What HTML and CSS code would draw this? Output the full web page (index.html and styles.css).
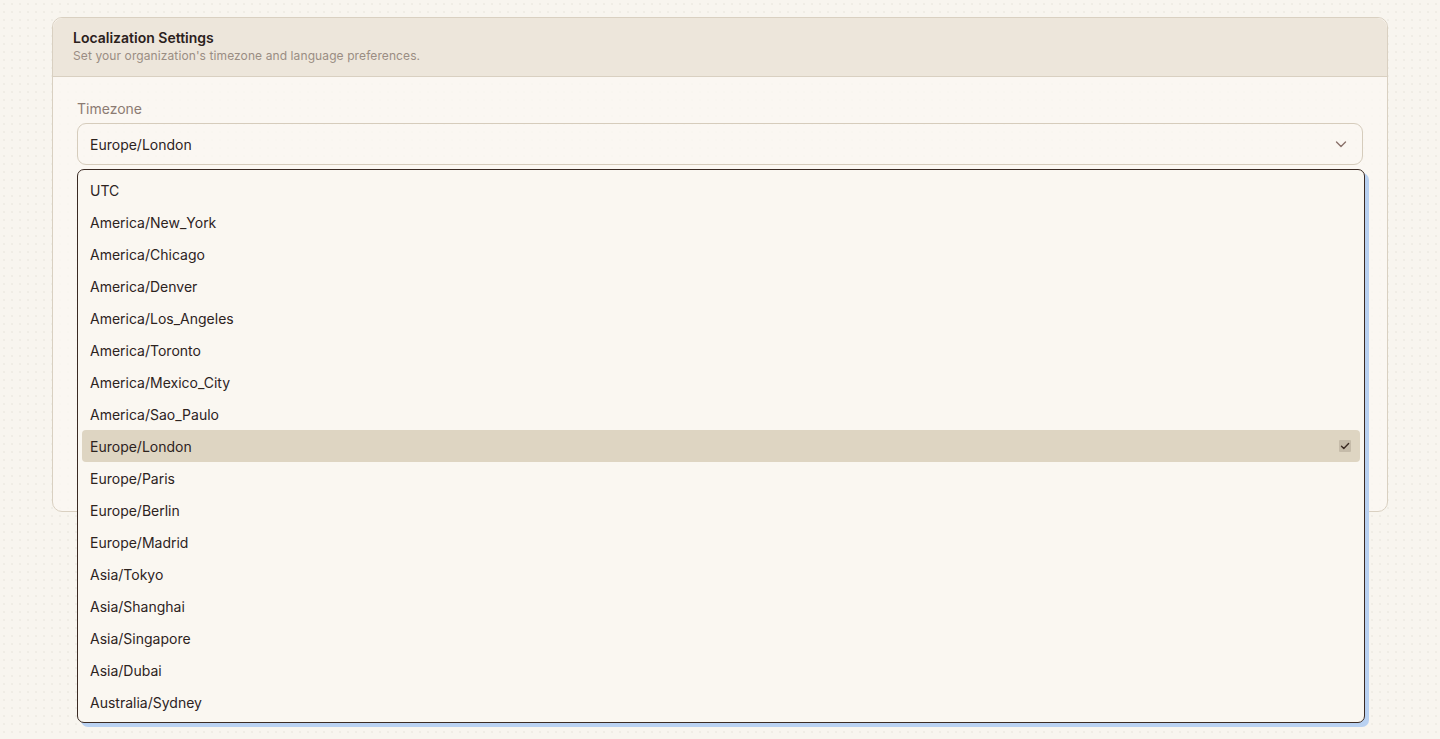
FILE: index.html
```html
<!DOCTYPE html>
<html lang="en">
<head>
<meta charset="utf-8">
<title>Localization Settings</title>
<link rel="stylesheet" href="styles.css">
</head>
<body>
<main class="page">
  <section class="card">
    <header class="card-head">
      <h2 class="card-title">Localization Settings</h2>
      <p class="card-sub">Set your organization's timezone and language preferences.</p>
    </header>
    <div class="card-body">
      <div class="field field-open">
        <label class="label">Timezone</label>
        <button class="select" type="button">
          <span>Europe/London</span>
          <svg class="chev" width="14" height="14" viewBox="0 0 14 14" fill="none"><path d="M2.5 5l4.5 4.5L11.5 5" stroke="currentColor" stroke-width="1.4" stroke-linecap="round" stroke-linejoin="round"/></svg>
        </button>
        <ul class="listbox">
          <li class="opt">UTC</li>
          <li class="opt">America/New_York</li>
          <li class="opt">America/Chicago</li>
          <li class="opt">America/Denver</li>
          <li class="opt">America/Los_Angeles</li>
          <li class="opt">America/Toronto</li>
          <li class="opt">America/Mexico_City</li>
          <li class="opt">America/Sao_Paulo</li>
          <li class="opt opt-sel">Europe/London<span class="check"><svg width="12" height="12" viewBox="0 0 12 12" fill="none"><path d="M2.5 6.3l2.3 2.2L9.6 3.6" stroke="currentColor" stroke-width="1.4" stroke-linecap="round" stroke-linejoin="round"/></svg></span></li>
          <li class="opt">Europe/Paris</li>
          <li class="opt">Europe/Berlin</li>
          <li class="opt">Europe/Madrid</li>
          <li class="opt">Asia/Tokyo</li>
          <li class="opt">Asia/Shanghai</li>
          <li class="opt">Asia/Singapore</li>
          <li class="opt">Asia/Dubai</li>
          <li class="opt">Australia/Sydney</li>
        </ul>
      </div>
      <div class="field-rest"></div>
    </div>
  </section>
</main>
</body>
</html>
```

FILE: styles.css
```css
* { box-sizing: border-box; }
html, body { margin: 0; padding: 0; }
body {
  background-color: #f8f5ef;
  background-image: radial-gradient(circle, rgba(120, 100, 80, 0.06) 0.7px, transparent 1px);
  background-size: 8px 8px;
  font-family: Inter, "Liberation Sans", sans-serif;
  color: #2d231e;
  height: 739px;
  overflow: hidden;
}
.page {
  padding: 17px 52px 0 52px;
}
.card {
  border: 1px solid #d9d0c1;
  border-radius: 10px;
  background-color: rgba(251, 248, 243, 0.8);
}
.card-head {
  background-color: #ede6db;
  border-bottom: 1px solid #d9d0c1;
  border-radius: 10px 10px 0 0;
  padding: 11px 20px 13px 20px;
  height: 59px;
}
.card-title {
  margin: 0;
  font-size: 14px;
  line-height: 18px;
  font-weight: 600;
  color: #2b211c;
}
.card-sub {
  margin: 1px 0 0 0;
  font-size: 12px;
  line-height: 16px;
  letter-spacing: 0.1px;
  color: #9a8d83;
}
.card-body {
  padding: 22px 24px 24px 24px;
  display: flex;
  flex-direction: column;
  gap: 24px;
}
.field {
  display: flex;
  flex-direction: column;
}
.field-open { position: relative; gap: 4px; }
.field-rest { height: 298px; }
.label {
  font-size: 14px;
  line-height: 20px;
  color: #8c7b72;
}
.select {
  height: 42px;
  border: 1px solid #d6ccbc;
  border-radius: 9px;
  background: transparent;
  padding: 0 12px;
  display: flex;
  align-items: center;
  justify-content: space-between;
  font-family: inherit;
  font-size: 14px;
  color: #2d231e;
  text-align: left;
}
.chev { color: #8a726a; margin-right: 2px; }
.listbox {
  position: absolute;
  top: 70px;
  left: 0;
  width: calc(100% + 2px);
  margin: 0;
  padding: 4px;
  list-style: none;
  background: #faf7f1;
  border: 1px solid #3a2a23;
  border-radius: 7px;
  box-shadow: 4px 4px 0 #b9d1f1;
  z-index: 5;
}
.opt {
  height: 32px;
  padding: 0 9px 0 8px;
  display: flex;
  align-items: center;
  justify-content: space-between;
  font-size: 14px;
  color: #2d231e;
  border-radius: 4px;
}
.opt-sel { background: #ded5c2; }
.check {
  width: 12px;
  height: 12px;
  background: #c5bba9;
  border-radius: 1px;
  color: #3a2a23;
  display: flex;
  align-items: center;
  justify-content: center;
}
```
